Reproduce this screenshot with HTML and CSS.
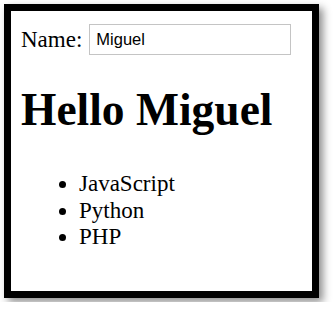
FILE: index.html
```html
<!DOCTYPE html>
<html lang="en">
<head>
  <meta charset="UTF-8">
  <title>Hello</title>
  <link rel="stylesheet" href="styles.css">
</head>
<body>
  <div class="frame">
    <div class="name-row">
      <label class="name-label" for="name">Name:</label>
      <input id="name" class="name-input" type="text" value="Miguel">
    </div>
    <h1 class="greeting">Hello Miguel</h1>
    <ul class="langs">
      <li>JavaScript</li>
      <li>Python</li>
      <li>PHP</li>
    </ul>
  </div>
</body>
</html>
```

FILE: styles.css
```css
body {
  margin: 0;
  padding: 4px;
  background: #fff;
  font-family: "Liberation Serif", "Times New Roman", serif;
  font-size: 23px;
  color: #000;
}

.frame {
  box-sizing: border-box;
  width: 315px;
  height: 294px;
  border: 7px solid #000;
  padding: 13px 10px 0;
  background: #fff;
  box-shadow: 4px 4px 8px rgba(0, 0, 0, 0.45);
}

.name-row {
  display: flex;
  align-items: center;
  gap: 7px;
}

.name-input {
  box-sizing: border-box;
  width: 202px;
  height: 31px;
  margin: 0;
  padding: 0 6px;
  border: 1px solid #c4c4c4;
  font-family: "Liberation Sans", Arial, sans-serif;
  font-size: 16.5px;
  color: #000;
}

.greeting {
  margin: 28px 0 0;
  font-size: 45.5px;
  font-weight: bold;
}

.langs {
  margin: 35px 0 0;
  padding-left: 58px;
  line-height: 26.5px;
}
```
